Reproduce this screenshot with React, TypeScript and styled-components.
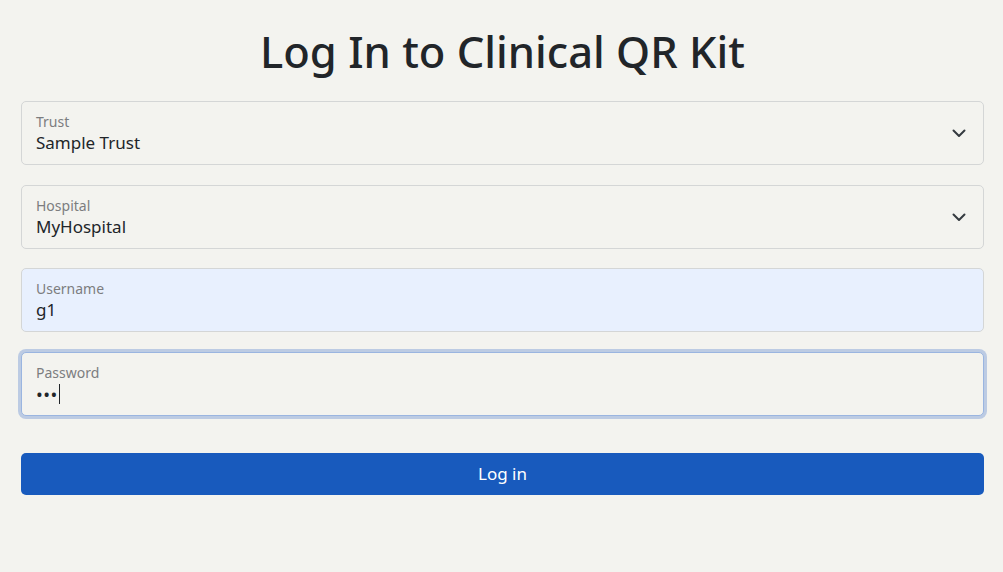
import React from "react";
import styled, { createGlobalStyle } from "styled-components";

const Global = createGlobalStyle`
  html, body { margin: 0; padding: 0; background: #f3f3ef; }
  body { font-family: "Noto Sans", "Open Sans", sans-serif; color: #212529; }
  * { box-sizing: border-box; }
`;

const Page = styled.div`
  padding: 22px 19px 0 21px;
  display: flex;
  flex-direction: column;
`;

const Title = styled.h1`
  margin: 0 0 20px;
  text-align: center;
  font-size: 43.5px;
  font-weight: 500;
  line-height: 59px;
  color: #212529;
`;

const Form = styled.form`
  display: flex;
  flex-direction: column;
  gap: 19.5px;
`;

const Field = styled.div<{ $bg?: string; $focus?: boolean }>`
  position: relative;
  height: 64px;
  border: 1px solid ${(p) => (p.$focus ? "#9ab5e0" : "#d4d6d6")};
  border-radius: 5px;
  background: ${(p) => p.$bg ?? "#f3f3ef"};
  padding: 11px 14px 0;
  display: flex;
  flex-direction: column;
  box-shadow: ${(p) => (p.$focus ? "0 0 0 3px #bccbe3" : "none")};
`;

const Label = styled.span`
  font-size: 14px;
  line-height: 18px;
  color: #7c7d7f;
`;

const Value = styled.span`
  font-size: 17px;
  line-height: 24px;
  color: #212529;
  display: flex;
  align-items: center;
`;

const Dots = styled.span`
  font-size: 18px;
  letter-spacing: 0.5px;
`;

const Caret = styled.span`
  display: inline-block;
  width: 1px;
  height: 20px;
  background: #212529;
  margin-left: 1px;
`;

const Chevron = styled.svg`
  position: absolute;
  right: 16px;
  top: 50%;
  transform: translateY(-50%);
`;

const Button = styled.button`
  margin-top: 17.5px;
  height: 42px;
  border: none;
  border-radius: 5px;
  background: #185abd;
  color: #fff;
  font-family: inherit;
  font-size: 17px;
`;

const Chev = () => (
  <Chevron width="16" height="16" viewBox="0 0 16 16" fill="none">
    <path d="M2.5 5.5l5.5 5.5 5.5-5.5" stroke="#343a40" strokeWidth="2" strokeLinecap="round" strokeLinejoin="round" />
  </Chevron>
);

export default function App() {
  return (
    <>
      <Global />
      <Page>
        <Title>Log In to Clinical QR Kit</Title>
        <Form onSubmit={(e) => e.preventDefault()}>
          <Field>
            <Label>Trust</Label>
            <Value>Sample Trust</Value>
            <Chev />
          </Field>
          <Field>
            <Label>Hospital</Label>
            <Value>MyHospital</Value>
            <Chev />
          </Field>
          <Field $bg="#e8f0fe">
            <Label>Username</Label>
            <Value>g1</Value>
          </Field>
          <Field $focus>
            <Label>Password</Label>
            <Value>
              <Dots>•••</Dots>
              <Caret />
            </Value>
          </Field>
          <Button type="submit">Log in</Button>
        </Form>
      </Page>
    </>
  );
}
